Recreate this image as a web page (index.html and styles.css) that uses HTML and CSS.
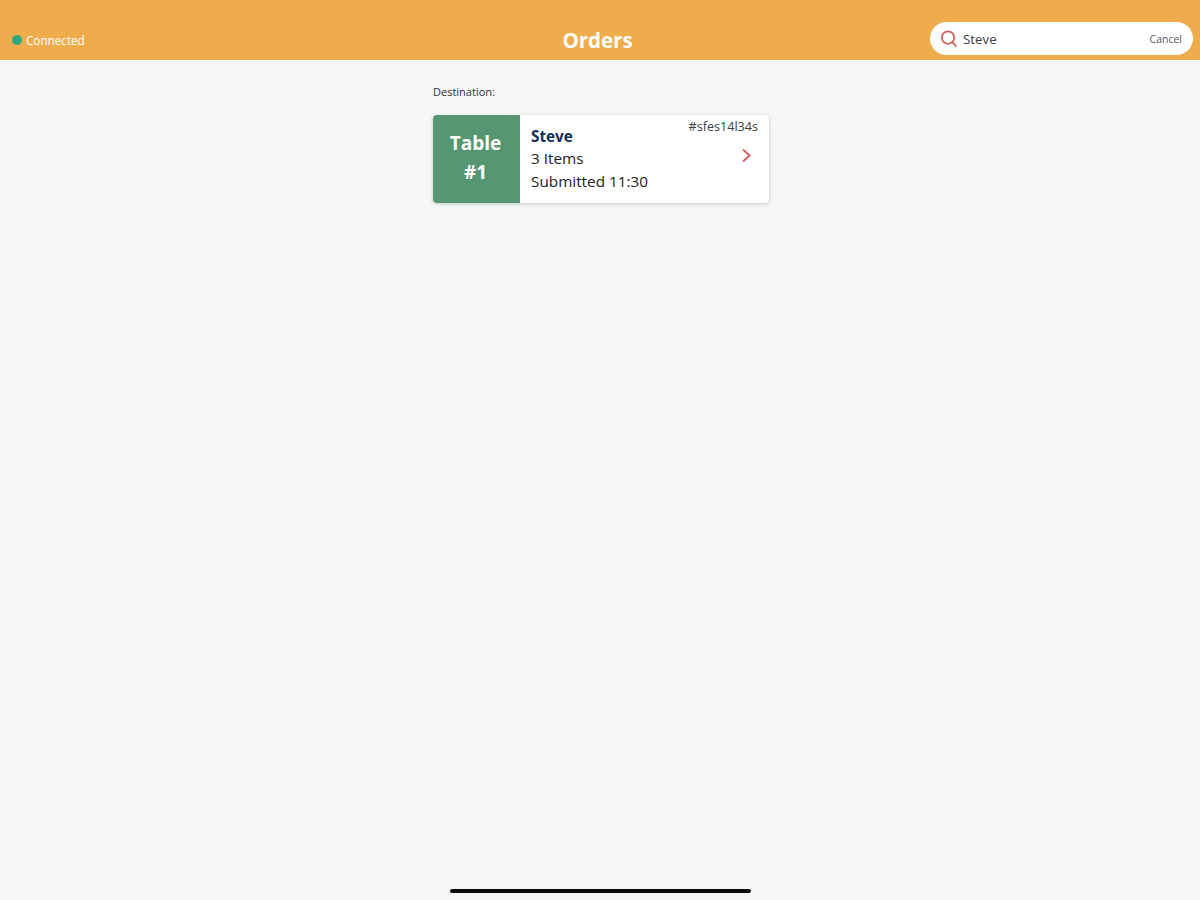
FILE: index.html
```html
<!DOCTYPE html>
<html lang="en">
<head>
    <meta charset="UTF-8">
    <meta name="viewport" content="width=device-width, initial-scale=1.0">
    <title>Orders</title>
    <link rel="stylesheet" href="styles.css">
</head>
<body>
    <header class="topbar">
        <div class="status">
            <span class="status-dot"></span>
            <span>Connected</span>
        </div>
        <h1 class="title">Orders</h1>
        <div class="search">
            <svg class="search-icon" width="18" height="18" viewBox="0 0 18 18" fill="none" stroke="#d9605a" stroke-width="1.8" stroke-linecap="round">
                <circle cx="8" cy="7.6" r="6.2"/>
                <path d="M12.4 12.2L15.8 16"/>
            </svg>
            <span class="search-text">Steve</span>
            <span class="search-cancel">Cancel</span>
        </div>
    </header>

    <main class="content">
        <div class="label">Destination:</div>
        <div class="order-card">
            <div class="order-table">Table<br>#1</div>
            <div class="order-info">
                <div class="order-name">Steve</div>
                <div>3 Items</div>
                <div>Submitted 11:30</div>
            </div>
            <div class="order-side">
                <div class="order-id">#sfes14l34s</div>
                <svg class="chevron" width="11" height="15" viewBox="0 0 11 15" fill="none" stroke="#d9605a" stroke-width="2">
                    <path d="M2 1.5L8.5 7.5L2 13.5"/>
                </svg>
            </div>
        </div>
    </main>

    <div class="home-bar"></div>
</body>
</html>
```

FILE: styles.css
```css
html, body {
    height: 100%;
}
body {
    margin: 0;
    display: flex;
    flex-direction: column;
    background-color: #f6f8f7;
    font-family: "Open Sans", sans-serif;
    color: #1c2226;
}
.topbar {
    height: 60px;
    box-sizing: border-box;
    flex-shrink: 0;
    background-color: #eeac4c;
    display: grid;
    grid-template-columns: 1fr auto 1fr;
    align-items: end;
    padding: 0 7px 5px 12px;
}
.status {
    display: flex;
    align-items: center;
    gap: 4px;
    font-size: 11.7px;
    line-height: 16px;
    color: #fff;
    padding-bottom: 7px;
}
.status-dot {
    width: 10px;
    height: 10px;
    border-radius: 50%;
    background-color: #2fa77f;
}
.title {
    margin: 0 10px 1px 0;
    font-size: 20.5px;
    line-height: 27px;
    font-weight: 700;
    color: #fff;
}
.search {
    justify-self: end;
    width: 263px;
    height: 33px;
    box-sizing: border-box;
    background-color: #fff;
    border-radius: 17px;
    display: flex;
    align-items: center;
    padding: 0 11px 0 10px;
}
.search-icon {
    margin-right: 5px;
}
.search-text {
    flex: 1;
    font-size: 13.3px;
    color: #3b4045;
}
.search-cancel {
    font-size: 10.5px;
    color: #555a5e;
}
.content {
    flex: 1;
    width: 336px;
    margin-left: 433px;
}
.label {
    margin-top: 25px;
    font-size: 11px;
    line-height: 14px;
    color: #2c3033;
}
.order-card {
    margin-top: 16px;
    height: 88px;
    display: flex;
    background-color: #fff;
    border-radius: 4px;
    box-shadow: 0 1px 4px rgba(0, 0, 0, 0.2);
    overflow: hidden;
}
.order-table {
    width: 87px;
    box-sizing: border-box;
    flex-shrink: 0;
    padding: 0 2px 3px 0;
    background-color: #559772;
    color: #fff;
    font-size: 19px;
    line-height: 29px;
    font-weight: 700;
    text-align: center;
    display: flex;
    align-items: center;
    justify-content: center;
}
.order-info {
    flex: 1;
    padding: 10px 0 0 11px;
    font-size: 15.3px;
    line-height: 23px;
}
.order-name {
    line-height: 22px;
    font-weight: 700;
    color: #0c3158;
}
.order-side {
    display: flex;
    flex-direction: column;
    align-items: flex-end;
    padding: 4px 11px 0 0;
}
.order-id {
    font-size: 12.6px;
    line-height: 15px;
    color: #3a4046;
}
.chevron {
    margin: 14px 6px 0 0;
}
.home-bar {
    flex-shrink: 0;
    width: 301px;
    height: 4px;
    margin: 0 0 7px 450px;
    border-radius: 2px;
    background-color: #0b0b0b;
}
```
